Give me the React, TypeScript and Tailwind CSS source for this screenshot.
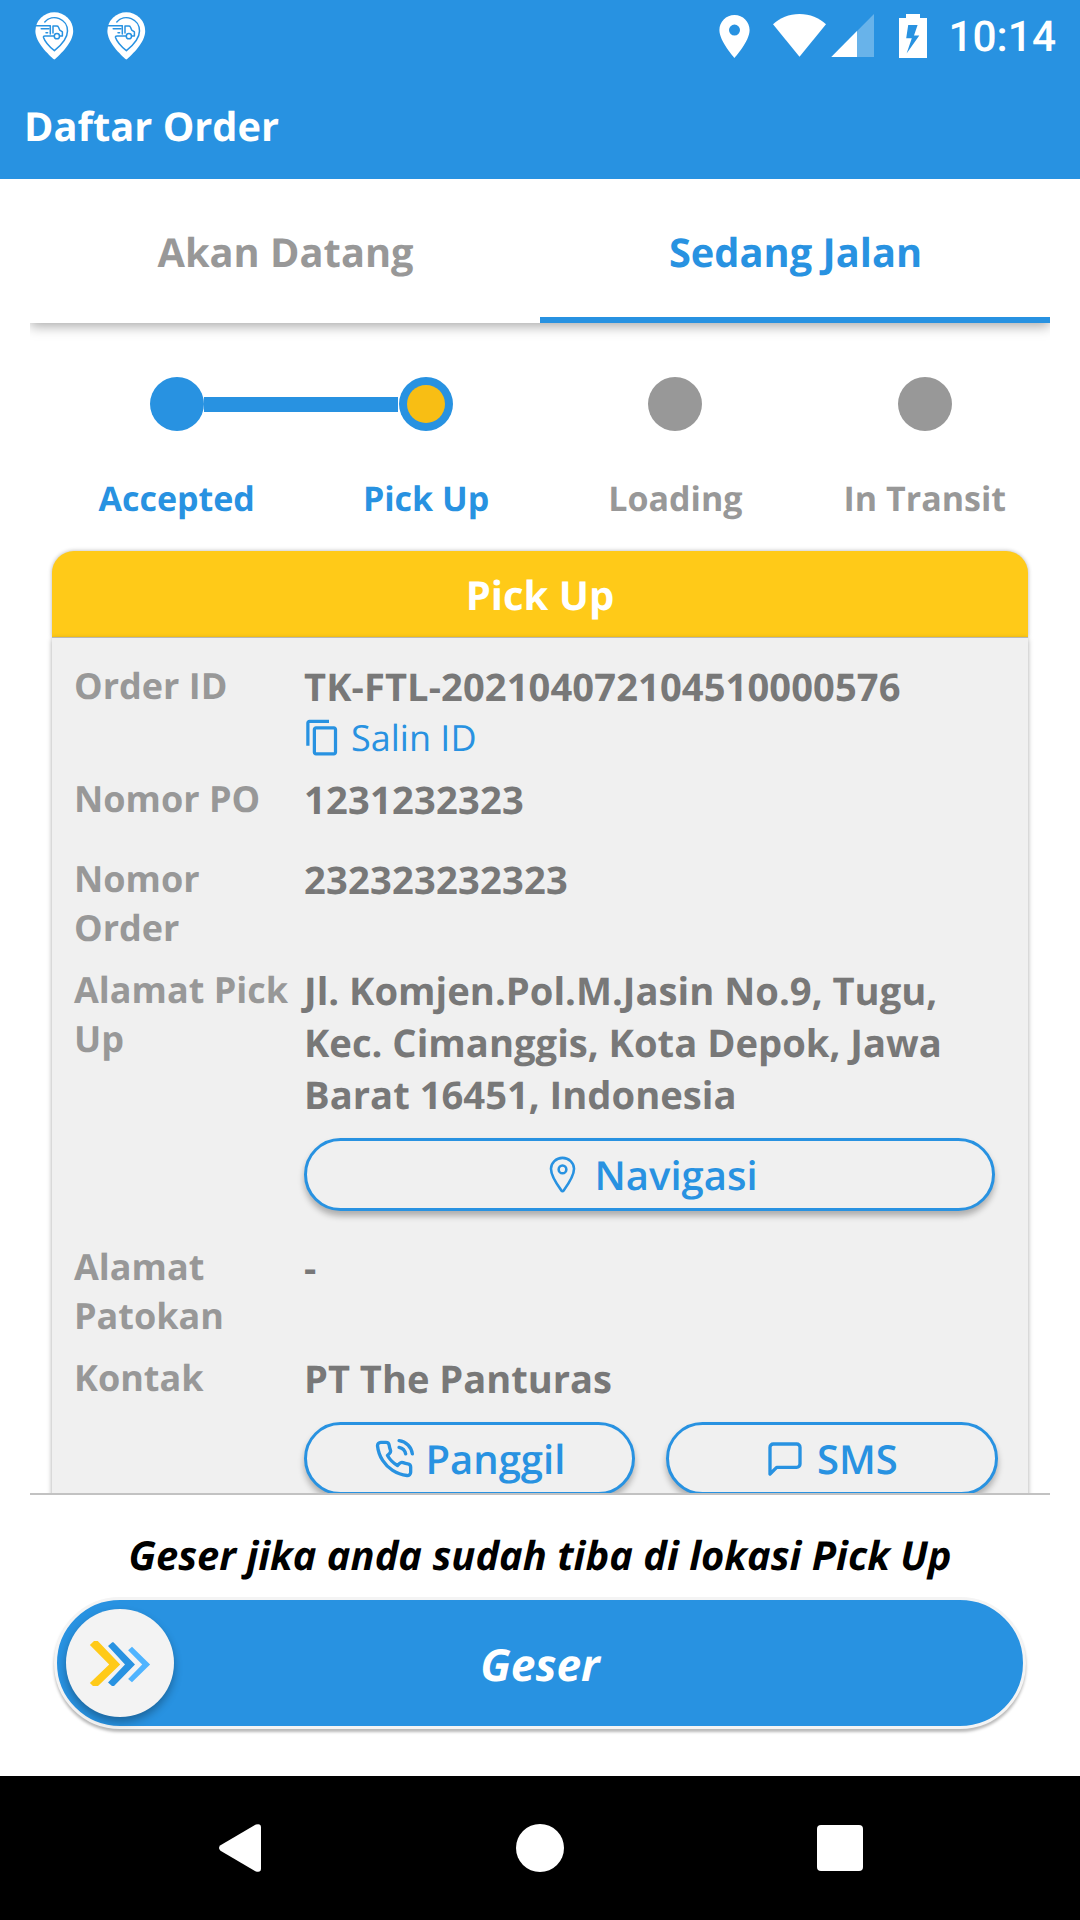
import type { ReactNode } from 'react';
import { FiMessageSquare, FiPhoneCall } from 'react-icons/fi';
import { IoLocationOutline } from 'react-icons/io5';
import { MdContentCopy } from 'react-icons/md';

function TruckPin() {
  return (
    <svg width="48" height="60" viewBox="0 0 48 60" fill="none">
      <path
        d="M24.3 53.6C18.5 48.5 5.4 36.5 5.4 24.9A18.9 18.6 0 0 1 43.2 24.9C43.2 36.5 30 48.5 24.3 53.6Z"
        fill="#fff"
      />
      <g stroke="#2892e1" strokeWidth="1.5" strokeLinecap="round" strokeLinejoin="round">
        <path d="M14.8 15.9A13.1 13.1 0 0 1 37.5 24.9C37.5 32.6 29.6 40.4 24.4 44.7C20.4 41.4 15.2 36.3 13.5 31.4Q13.2 30 15 30H24.2" />
        <path d="M6 19.7H20.3V28" />
        <path d="M11.2 22.8H19M16 26.7H17.6" />
        <circle cx="26.9" cy="30.2" r="2.6" />
        <path d="M23 27V20H26.6Q28 20 28.4 21L29.8 24.2L32.4 25.9V29.9H29.6" />
      </g>
    </svg>
  );
}

function StatusBar() {
  return (
    <div className="flex h-[72px] justify-between pr-6 pl-[30px] text-white">
      <div className="flex gap-6 pt-1.5">
        <TruckPin />
        <TruckPin />
      </div>
      <div className="flex">
        <svg width="232" height="72" viewBox="704 0 232 72" fill="#fff">
          <path
            fillRule="evenodd"
            d="M734.5 15C726 15 719.4 21.7 719.4 30.1C719.4 41.5 734.5 58 734.5 58C734.5 58 749.6 41.5 749.6 30.1C749.6 21.7 743 15 734.5 15ZM734.5 35.6A5.5 5.5 0 1 1 734.5 24.6A5.5 5.5 0 0 1 734.5 35.6Z"
          />
          <path d="M799.5 56.7L773 24.2C779.8 18 789 14.1 799.5 14.1C810 14.1 819.2 18 826 24.2Z" />
          <path d="M874 14V57H831.3Z" fillOpacity="0.3" />
          <path d="M857 31.1V57H831.3Z" />
          <path
            fillRule="evenodd"
            d="M906 14H920V18H927V58H899V18H906ZM908.2 25L906.2 38.3H911.8L906.6 53.6L919.3 35.5H914L917.6 25Z"
          />
        </svg>
        <span className="pt-[13px] pl-3 font-[Roboto] text-[42.4px] leading-[50px] font-medium">10:14</span>
      </div>
    </div>
  );
}

const steps = [
  { label: 'Accepted', state: 'done' },
  { label: 'Pick Up', state: 'current' },
  { label: 'Loading', state: 'todo' },
  { label: 'In Transit', state: 'todo' },
];

function Stepper() {
  return (
    <div className="ml-[22px] grid w-[997.5px] grid-cols-4 pt-[54px]">
      {steps.map((s) => (
        <div key={s.label} className="relative flex flex-col items-center">
          {s.state === 'done' && <div className="absolute top-[20px] left-[151.5px] h-[15px] w-[194px] bg-[#2892e1]" />}
          <div
            className={
              s.state === 'todo'
                ? 'size-[54px] rounded-full bg-[#989898]'
                : 'flex size-[54px] items-center justify-center rounded-full bg-[#2892e1]'
            }
          >
            {s.state === 'current' && <div className="size-[38px] rounded-full bg-[#f8be14]" />}
          </div>
          <div
            className={
              s.state === 'todo'
                ? 'mt-[44px] text-[34px] leading-[46px] font-bold text-[#989898]'
                : 'mt-[44px] text-[34px] leading-[46px] font-bold text-[#2892e1]'
            }
          >
            {s.label}
          </div>
        </div>
      ))}
    </div>
  );
}

function Row({ label, children }: { label: string; children: ReactNode }) {
  return (
    <div className="flex min-h-[80px] pb-[11px]">
      <div className="w-[230px] shrink-0 py-px text-[36px] leading-[49px] font-bold text-[#989898]">{label}</div>
      <div className="w-[694px] pt-px text-[38.1px] leading-[52px] font-bold text-[#787878]">{children}</div>
    </div>
  );
}

const pill =
  'flex h-[73px] items-center rounded-full border-[3px] border-[#2892e1] bg-[#f0f0f0] text-[40px] leading-[55px] font-semibold text-[#2892e1] shadow-[0_5px_6px_rgba(0,0,0,0.28)]';

function OrderCard() {
  return (
    <div className="mx-[22px] w-[976px]">
      <div className="flex h-[86px] items-center justify-center rounded-t-[22px] bg-[#ffca18] text-[40px] leading-[55px] font-bold text-white shadow-[0_0_4px_rgba(0,0,0,0.3)]">
        Pick Up
      </div>
      <div className="relative h-[900px] border-t border-[#b8b8b8] bg-[#f0f0f0] pt-[22px] pl-[22px] shadow-[0_2px_5px_rgba(0,0,0,0.35)]">
        <Row label="Order ID">
          <span className="tracking-[0.11px]">TK-FTL-202104072104510000576</span>
          <div className="flex h-[49px] items-center text-[36px] leading-[49px] font-normal text-[#2892e1]">
            <MdContentCopy className="mr-[9px] -ml-px size-[39px]" />
            Salin ID
          </div>
        </Row>
        <Row label="Nomor PO">
          <span className="tracking-[0.22px]">1231232323</span>
        </Row>
        <Row label="Nomor Order">
          <span className="tracking-[0.22px]">232323232323</span>
        </Row>
        <Row label="Alamat Pick Up">
          <p className="text-[38.2px]">
            Jl. Komjen.Pol.M.Jasin No.9, Tugu, Kec. Cimanggis, Kota Depok, Jawa Barat 16451, Indonesia
          </p>
          <div className="mt-[17px] mb-[19px] w-[691px]">
            <div className={pill}>
              <IoLocationOutline className="ml-[235px] size-[41px]" />
              <span className="ml-[11.5px]">Navigasi</span>
            </div>
          </div>
        </Row>
        <Row label="Alamat Patokan">-</Row>
        <Row label="Kontak">
          PT The Panturas
          <div className="mt-[17px] flex gap-[31px]">
            <div className="w-[331px]">
              <div className={pill}>
                <FiPhoneCall className="ml-[67px] size-[40px]" />
                <span className="ml-[11.5px]">Panggil</span>
              </div>
            </div>
            <div className="w-[332px]">
              <div className={pill}>
                <FiMessageSquare className="ml-[95.5px] size-[40px]" />
                <span className="ml-[12.5px]">SMS</span>
              </div>
            </div>
          </div>
        </Row>
      </div>
    </div>
  );
}

function Slider() {
  return (
    <div className="mx-auto h-[132px] w-[972px] rounded-full border-[3px] border-[#f4f4f4] bg-[#2892e1] shadow-[0_3px_3px_rgba(0,0,0,0.28)]">
      <div className="relative flex h-full items-center justify-center pt-px text-[44.3px] leading-[60px] font-bold text-white italic">
        Geser
        <div className="absolute top-[8.5px] left-[9px] size-[108px] rounded-full bg-[#f3f3f3] shadow-[0_5px_8px_rgba(0,0,0,0.3)]">
          <svg width="108" height="108" viewBox="66 1609 108 108">
            <path d="M89.9 1645L94 1641H97.8L120.2 1664.5L98 1686H93L89.9 1683L109.2 1664.5Z" fill="#ffca18" />
            <path d="M108 1646L112.3 1642.3H113.4L135 1664.5L114 1686H112L108 1682.5L125 1664.5Z" fill="#2892e1" />
            <path d="M128.1 1650.3L132 1646.7L150.1 1664.5L132 1682.3L128.1 1679L142.2 1664.5Z" fill="#4fb4ff" />
          </svg>
        </div>
      </div>
    </div>
  );
}

export default function App() {
  return (
    <div className="flex h-[1920px] w-[1080px] flex-col overflow-hidden bg-white font-['Open_Sans',sans-serif] [text-rendering:geometricPrecision]">
      <header className="h-[179px] shrink-0 bg-[#2892e1]">
        <StatusBar />
        <h1 className="pt-[26px] pl-6 text-[39.8px] leading-[55px] font-bold text-white">Daftar Order</h1>
      </header>

      <main className="mx-[30px] h-[1314px] shrink-0">
        <div className="relative overflow-hidden pb-5">
          <div className="grid h-[144px] grid-cols-2 bg-white text-center text-[39.8px] leading-[54px] font-bold shadow-[0_3px_12px_rgba(0,0,0,0.35)]">
            <div className="pt-[46px] pl-px text-[#989898]">Akan Datang</div>
            <div className="border-b-[6px] border-[#2892e1] pt-[46px] pl-px text-[#2892e1]">Sedang Jalan</div>
          </div>
        </div>
        <div className="-mt-5">
          <Stepper />
        </div>
        <div className="-mx-2 h-[972px] overflow-hidden px-2 pt-[30px]">
          <OrderCard />
        </div>
      </main>

      <section className="relative h-[283px] shrink-0">
        <div className="mx-[30px] h-[2px] bg-[#c2c2c2]" />
        <p className="pt-[33px] text-center text-[39.9px] leading-[54px] font-bold text-black italic">
          Geser jika anda sudah tiba di lokasi Pick Up
        </p>
        <div className="pt-[15px]">
          <Slider />
        </div>
      </section>

      <nav className="flex h-[144px] shrink-0 items-center bg-black">
        <svg className="ml-[216px]" width="48" height="48" viewBox="0 0 48 48" fill="#fff">
          <path d="M4.5 21.3L39.8 0.6Q45 -1 45 3.5V44.5Q45 49 39.8 47.4L4.5 26.7Q1.5 24 4.5 21.3Z" />
        </svg>
        <div className="ml-[252px] size-[48px] rounded-full bg-white" />
        <div className="ml-[253px] size-[46px] rounded-[4px] bg-white" />
      </nav>
    </div>
  );
}
